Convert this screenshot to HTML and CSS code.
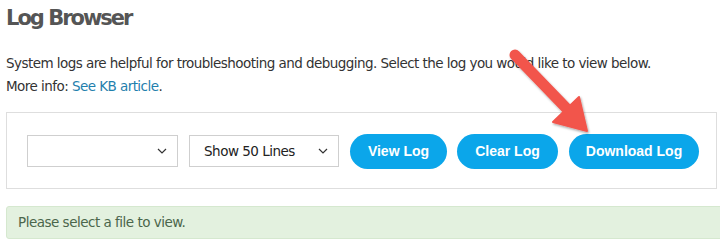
FILE: index.html
```html
<!DOCTYPE html>
<html>
<head>
<meta charset="utf-8">
<link rel="stylesheet" href="styles.css">
</head>
<body>
<div class="page">
  <h1 class="title">Log Browser</h1>
  <p class="intro">System logs are helpful for troubleshooting and debugging. Select the log you would like to view below.<br>More info: <a class="link" href="#">See KB article</a>.</p>
  <div class="panel">
    <div class="select select-file"><span class="select-text"></span><svg class="chev" viewBox="0 0 10 6" width="10" height="6"><path d="M1 1 L5 5 L9 1" fill="none" stroke="#333" stroke-width="1.2"/></svg></div>
    <div class="select select-lines"><span class="select-text">Show 50 Lines</span><svg class="chev" viewBox="0 0 10 6" width="10" height="6"><path d="M1 1 L5 5 L9 1" fill="none" stroke="#333" stroke-width="1.2"/></svg></div>
    <button class="btn btn-view">View Log</button>
    <button class="btn btn-clear">Clear Log</button>
    <button class="btn btn-download">Download Log</button>
  </div>
  <div class="alert">Please select a file to view.</div>
  <svg class="arrow" width="720" height="248" viewBox="0 0 720 248">
    <defs>
      <filter id="sh" x="-20%" y="-20%" width="140%" height="140%">
        <feDropShadow dx="1" dy="1.5" stdDeviation="1.2" flood-color="#000" flood-opacity="0.35"/>
      </filter>
    </defs>
    <g filter="url(#sh)" fill="#f2544c" stroke="#f2544c" stroke-linejoin="round">
      <line x1="515" y1="55" x2="570" y2="112" stroke-width="11" stroke-linecap="round"/>
      <polygon points="587,131 553,122 579,97" stroke-width="2"/>
    </g>
  </svg>
</div>
</body>
</html>
```
FILE: styles.css
```css
html, body {
  margin: 0;
  padding: 0;
  background: #fff;
  overflow: hidden;
}
.page {
  position: relative;
  width: 720px;
  height: 248px;
  padding: 0 0 0 6px;
  box-sizing: border-box;
  font-family: "DejaVu Sans", Verdana, sans-serif;
  color: #333;
}
.title {
  margin: 0;
  padding-top: 5px;
  font-size: 21px;
  line-height: 26px;
  font-weight: bold;
  color: #555;
  letter-spacing: -2px;
}
.intro {
  margin: 21px 0 0 0;
  font-size: 13.5px;
  line-height: 23px;
  color: #333;
  letter-spacing: -0.55px;
}
.link {
  color: #1f80ad;
  text-decoration: none;
}
.panel {
  margin-top: 14px;
  width: 711px;
  height: 77px;
  box-sizing: border-box;
  border: 1px solid #dedede;
  display: flex;
  align-items: center;
  padding: 0 0 0 20px;
  gap: 11px;
}
.select {
  width: 151px;
  height: 32px;
  box-sizing: border-box;
  border: 1px solid #cfcfcf;
  display: flex;
  align-items: center;
  justify-content: space-between;
  padding: 0 10px 0 14px;
  font-size: 13.5px;
  letter-spacing: -0.5px;
  color: #222;
}
.select-lines {
  width: 150px;
}
.chev {
  display: block;
}
.btn {
  height: 35px;
  border: none;
  border-radius: 18px;
  background: #0ba6ea;
  color: #fff;
  font-family: "Liberation Sans", Arial, sans-serif;
  font-weight: bold;
  font-size: 14px;
  padding: 0;
  margin-top: 1px;
}
.btn-view { width: 97px; }
.btn-clear { width: 101px; margin-left: -1px; }
.btn-download { width: 130px; }
.alert {
  margin-top: 17px;
  width: 730px;
  height: 33px;
  box-sizing: border-box;
  background: #e3f1df;
  border: 1px solid #d5e8cf;
  border-radius: 3px;
  color: #4b664b;
  font-size: 13.5px;
  letter-spacing: -0.5px;
  line-height: 31px;
  padding-left: 11px;
}
.arrow {
  position: absolute;
  left: 0;
  top: 0;
  pointer-events: none;
}
```
